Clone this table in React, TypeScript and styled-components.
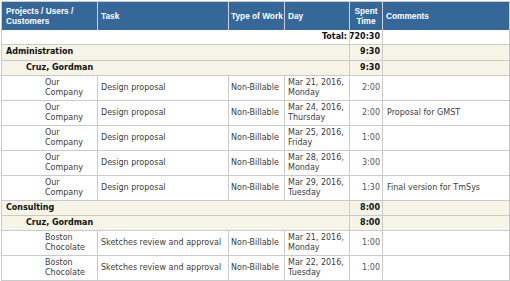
import React from "react";
import styled, { createGlobalStyle } from "styled-components";

const GlobalStyle = createGlobalStyle`
  html, body { margin: 0; padding: 0; background: #ffffff; }
  body { font-family: "DejaVu Sans", Verdana, sans-serif; font-size: 8px; }
`;

const COLS = "96px 131px 56px 65px 33px 127px";
const BORDER = "#cacaca";

const Table = styled.div`
  margin: 1px 0 0 1px;
  width: 509px;
  border-top: 1px solid ${BORDER};
  border-left: 1px solid ${BORDER};
  box-sizing: border-box;
  font-family: "DejaVu Sans", Verdana, sans-serif;
  font-size: 8px;
`;

const Row = styled.div<{ $h: number; $bg?: string }>`
  display: grid;
  grid-template-columns: ${COLS};
  height: ${(p) => p.$h}px;
  background: ${(p) => p.$bg || "#ffffff"};
`;

const HeaderCell = styled.div<{ $center?: boolean; $pl?: number }>`
  box-sizing: border-box;
  display: flex;
  align-items: center;
  justify-content: ${(p) => (p.$center ? "center" : "flex-start")};
  text-align: ${(p) => (p.$center ? "center" : "left")};
  padding: 0 1px 0 ${(p) => p.$pl ?? 3}px;
  background: #356799;
  color: #ffffff;
  border-right: 1px solid #c9d2dc;
  font-family: "Liberation Sans", Arial, sans-serif;
  font-weight: bold;
  font-size: 8.3px;
  line-height: 10px;
  white-space: nowrap;
  overflow: hidden;
`;

const Cell = styled.div<{ $pl?: number; $right?: boolean; $muted?: boolean }>`
  box-sizing: border-box;
  display: flex;
  align-items: center;
  justify-content: ${(p) => (p.$right ? "flex-end" : "flex-start")};
  text-align: ${(p) => (p.$right ? "right" : "left")};
  padding: 0 ${(p) => (p.$right ? 2 : 3)}px 0 ${(p) => p.$pl ?? 3}px;
  border-right: 1px solid ${BORDER};
  border-bottom: 1px solid ${BORDER};
  color: ${(p) => (p.$muted ? "#555555" : "#3c3c3c")};
  line-height: 10.5px;
  overflow: hidden;
`;

const SpanCell = styled(Cell)`
  grid-column: span 4;
`;

const BoldText = styled.span`
  font-weight: bold;
  color: #111111;
`;

const Lines = styled.div`
  display: flex;
  flex-direction: column;
`;

type Entry = {
  customer: string;
  task: string;
  type: string;
  date: string;
  day: string;
  time: string;
  comment: string;
};

type Group = {
  project: string;
  total: string;
  users: { name: string; total: string; entries: Entry[] }[];
};

const groups: Group[] = [
  {
    project: "Administration",
    total: "9:30",
    users: [
      {
        name: "Cruz, Gordman",
        total: "9:30",
        entries: [
          { customer: "Our Company", task: "Design proposal", type: "Non-Billable", date: "Mar 21, 2016,", day: "Monday", time: "2:00", comment: "" },
          { customer: "Our Company", task: "Design proposal", type: "Non-Billable", date: "Mar 24, 2016,", day: "Thursday", time: "2:00", comment: "Proposal for GMST" },
          { customer: "Our Company", task: "Design proposal", type: "Non-Billable", date: "Mar 25, 2016,", day: "Friday", time: "1:00", comment: "" },
          { customer: "Our Company", task: "Design proposal", type: "Non-Billable", date: "Mar 28, 2016,", day: "Monday", time: "3:00", comment: "" },
          { customer: "Our Company", task: "Design proposal", type: "Non-Billable", date: "Mar 29, 2016,", day: "Tuesday", time: "1:30", comment: "Final version for TmSys" },
        ],
      },
    ],
  },
  {
    project: "Consulting",
    total: "8:00",
    users: [
      {
        name: "Cruz, Gordman",
        total: "8:00",
        entries: [
          { customer: "Boston Chocolate", task: "Sketches review and approval", type: "Non-Billable", date: "Mar 21, 2016,", day: "Monday", time: "1:00", comment: "" },
          { customer: "Boston Chocolate", task: "Sketches review and approval", type: "Non-Billable", date: "Mar 22, 2016,", day: "Tuesday", time: "1:00", comment: "" },
        ],
      },
    ],
  },
];

const GROUP_BG = "#f6f3e7";

export default function App() {
  return (
    <>
      <GlobalStyle />
      <Table>
        <Row $h={28}>
          <HeaderCell $pl={4}>
            Projects / Users /
            <br />
            Customers
          </HeaderCell>
          <HeaderCell>Task</HeaderCell>
          <HeaderCell $pl={2}>Type of Work</HeaderCell>
          <HeaderCell>Day</HeaderCell>
          <HeaderCell $center $pl={1}>
            Spent
            <br />
            Time
          </HeaderCell>
          <HeaderCell>Comments</HeaderCell>
        </Row>
        <Row $h={15}>
          <SpanCell $right>
            <BoldText>Total:</BoldText>
          </SpanCell>
          <Cell $right>
            <BoldText>720:30</BoldText>
          </Cell>
          <Cell />
        </Row>
        {groups.map((g, gi) => (
          <React.Fragment key={g.project}>
            <Row $h={gi === 0 ? 16 : 15} $bg={GROUP_BG}>
              <SpanCell $pl={4}>
                <BoldText>{g.project}</BoldText>
              </SpanCell>
              <Cell $right>
                <BoldText>{g.total}</BoldText>
              </Cell>
              <Cell />
            </Row>
            {g.users.map((u) => (
              <React.Fragment key={u.name}>
                <Row $h={15} $bg={GROUP_BG}>
                  <SpanCell $pl={24}>
                    <BoldText>{u.name}</BoldText>
                  </SpanCell>
                  <Cell $right>
                    <BoldText>{u.total}</BoldText>
                  </Cell>
                  <Cell />
                </Row>
                {u.entries.map((e, ei) => (
                  <Row $h={25} key={ei}>
                    <Cell $pl={43}>{e.customer}</Cell>
                    <Cell>{e.task}</Cell>
                    <Cell $pl={2}>{e.type}</Cell>
                    <Cell>
                      <Lines>
                        <span>{e.date}</span>
                        <span>{e.day}</span>
                      </Lines>
                    </Cell>
                    <Cell $right $muted>
                      {e.time}
                    </Cell>
                    <Cell $pl={4}>{e.comment}</Cell>
                  </Row>
                ))}
              </React.Fragment>
            ))}
          </React.Fragment>
        ))}
      </Table>
    </>
  );
}
